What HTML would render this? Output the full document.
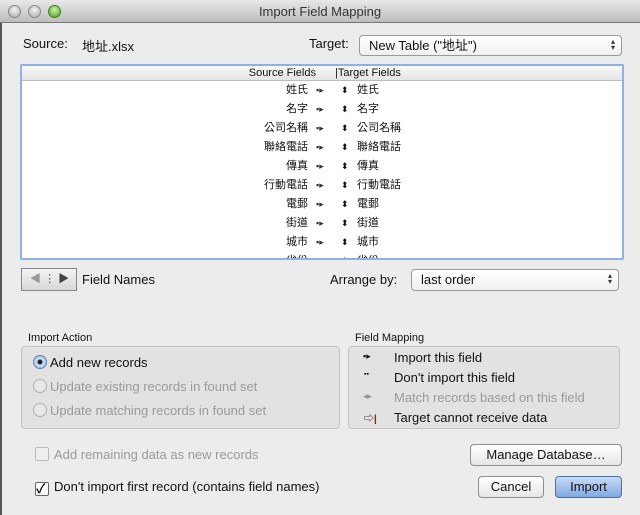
<!DOCTYPE html>
<html><head><meta charset="utf-8"><style>
*{margin:0;padding:0;box-sizing:border-box}
body{width:640px;height:515px;overflow:hidden;background:#ececec;font-family:"Liberation Sans","Noto Sans CJK TC",sans-serif;font-size:13px;color:#111;position:relative}
.abs{position:absolute}
#title{left:0;top:0;width:640px;height:23px;background:linear-gradient(#e8e8e8,#bdbdbd);border-bottom:1px solid #777;text-align:center;line-height:23px;font-size:13px;color:#333}
.light{width:13px;height:13px;border-radius:50%;top:5px;background:radial-gradient(circle at 50% 35%,#f4f4f4,#a8a8a8);border:1px solid #888}
.btn{background:linear-gradient(#fff,#e6e6e6);border:1px solid #8e8e8e;border-radius:4px;text-align:center;font-size:13px}
.pop{background:linear-gradient(#fff,#f0f0f0);border:1px solid #9a9a9a;border-radius:4px;padding-left:9px;font-size:13px}
.ud{position:absolute;right:6px;top:3px;font-size:8px;line-height:6px;color:#333}
.row{position:absolute;left:0;width:600px;height:19px;font-size:11px;line-height:19px}
.row .s{position:absolute;right:314px}
.row .a{position:absolute;left:294px;font-size:9px;color:#333}
.row .d{position:absolute;left:319px;font-size:9px}
.row .t{position:absolute;left:335px}
.grp{background:#e2e2e2;border:1px solid #c4c4c4;border-radius:4px}
.dis{color:#9a9a9a}
.radio{display:inline-block;width:14px;height:14px;border-radius:50%;border:1px solid #b0b0b0;background:#e8e8e8;vertical-align:-2px;margin-right:3px}
</style></head><body>
<div id="title" class="abs">Import Field Mapping</div>
<div class="abs light" style="left:8px"></div>
<div class="abs light" style="left:28px"></div>
<div class="abs light" style="left:48px;background:radial-gradient(circle at 50% 35%,#c9f3a4,#4c9d23);border-color:#3d7d1e"></div>
<div class="abs" style="left:0;top:23px;width:2px;height:492px;background:#555"></div>

<div class="abs" style="left:23px;top:36px">Source:</div>
<div class="abs" style="left:82px;top:36px">地址.xlsx</div>
<div class="abs" style="left:309px;top:36px">Target:</div>
<div class="abs pop" style="left:359px;top:35px;width:263px;height:21px;line-height:19px">New Table ("地址")<div class="ud">▴<br>▾</div></div>

<div class="abs" style="left:20px;top:64px;width:604px;height:196px;border:2px solid #8eb2e6;background:#fff;border-radius:2px;overflow:hidden">
 <div style="height:15px;background:linear-gradient(#fafafa,#e4e4e4);border-bottom:1px solid #bbb;font-size:11px;line-height:15px;position:relative">
  <span style="position:absolute;right:306px">Source Fields</span>
  <span style="position:absolute;left:290px;color:#bbb">|</span>
  <span style="position:absolute;left:313px">|Target Fields</span>
 </div>
</div>
<div class="abs" style="left:22px;top:81px;width:600px;height:177px;overflow:hidden">
 <div class="row" style="top:0"><span class="s">姓氏</span><span class="a">▪▸</span><span class="d">⬍</span><span class="t">姓氏</span></div>
 <div class="row" style="top:19px"><span class="s">名字</span><span class="a">▪▸</span><span class="d">⬍</span><span class="t">名字</span></div>
 <div class="row" style="top:38px"><span class="s">公司名稱</span><span class="a">▪▸</span><span class="d">⬍</span><span class="t">公司名稱</span></div>
 <div class="row" style="top:57px"><span class="s">聯絡電話</span><span class="a">▪▸</span><span class="d">⬍</span><span class="t">聯絡電話</span></div>
 <div class="row" style="top:76px"><span class="s">傳真</span><span class="a">▪▸</span><span class="d">⬍</span><span class="t">傳真</span></div>
 <div class="row" style="top:95px"><span class="s">行動電話</span><span class="a">▪▸</span><span class="d">⬍</span><span class="t">行動電話</span></div>
 <div class="row" style="top:114px"><span class="s">電郵</span><span class="a">▪▸</span><span class="d">⬍</span><span class="t">電郵</span></div>
 <div class="row" style="top:133px"><span class="s">街道</span><span class="a">▪▸</span><span class="d">⬍</span><span class="t">街道</span></div>
 <div class="row" style="top:152px"><span class="s">城市</span><span class="a">▪▸</span><span class="d">⬍</span><span class="t">城市</span></div>
 <div class="row" style="top:171px"><span class="s">省份</span><span class="a">▪▸</span><span class="d">⬍</span><span class="t">省份</span></div>
</div>
<div class="abs" style="left:20px;top:64px;width:604px;height:196px;border:2px solid #8eb2e6;border-radius:2px"></div>

<div class="abs" style="left:21px;top:268px;width:56px;height:23px;background:linear-gradient(#f4f4f4,#d8d8d8);border:1px solid #888;font-size:11px;line-height:21px;color:#999;padding-left:8px">◀ <span style="color:#555">⋮</span> <span style="color:#444">▶</span></div>
<div class="abs" style="left:82px;top:272px">Field Names</div>
<div class="abs" style="left:330px;top:272px">Arrange by:</div>
<div class="abs pop" style="left:411px;top:269px;width:208px;height:22px;line-height:20px">last order<div class="ud">▴<br>▾</div></div>

<div class="abs" style="left:28px;top:332px;font-size:11px">Import Action</div>
<div class="abs grp" style="left:21px;top:346px;width:319px;height:83px"></div>
<div class="abs" style="left:33px;top:355px"><span class="radio" style="background:radial-gradient(#222 0 2px,#cfe0f7 3px,#8fb3e3);border-color:#5c7fb0"></span>Add new records</div>
<div class="abs dis" style="left:33px;top:379px"><span class="radio"></span>Update existing records in found set</div>
<div class="abs dis" style="left:33px;top:403px"><span class="radio"></span>Update matching records in found set</div>

<div class="abs" style="left:355px;top:332px;font-size:11px">Field Mapping</div>
<div class="abs grp" style="left:348px;top:346px;width:272px;height:83px"></div>
<div class="abs" style="left:363px;top:351px;font-size:9px">▪▸</div><div class="abs" style="left:394px;top:350px">Import this field</div>
<div class="abs" style="left:364px;top:371px;font-size:7px">▪▪</div><div class="abs" style="left:394px;top:370px">Don't import this field</div>
<div class="abs dis" style="left:363px;top:391px;font-size:9px">◂▸</div><div class="abs dis" style="left:394px;top:390px">Match records based on this field</div>
<div class="abs" style="left:364px;top:410px;font-size:10px">⇨<span style="color:#c00;font-weight:bold">|</span></div><div class="abs" style="left:394px;top:410px">Target cannot receive data</div>

<div class="abs dis" style="left:35px;top:447px"><span style="display:inline-block;width:14px;height:14px;border:1px solid #bbb;background:#eee;border-radius:2px;vertical-align:-2px;margin-right:5px"></span>Add remaining data as new records</div>
<div class="abs" style="left:35px;top:479px"><span style="display:inline-block;width:14px;height:14px;border:1px solid #666;background:#fff;border-radius:2px;vertical-align:-2px;margin-right:5px;font-size:13px;line-height:11px;font-weight:bold">✓</span>Don't import first record (contains field names)</div>

<div class="abs btn" style="left:470px;top:444px;width:152px;height:22px;line-height:20px">Manage Database…</div>
<div class="abs btn" style="left:478px;top:476px;width:66px;height:22px;line-height:20px">Cancel</div>
<div class="abs btn" style="left:555px;top:476px;width:67px;height:22px;line-height:20px;background:linear-gradient(#c9dcf6,#7fa8e4);border-color:#4b6fa6">Import</div>
</body></html>
